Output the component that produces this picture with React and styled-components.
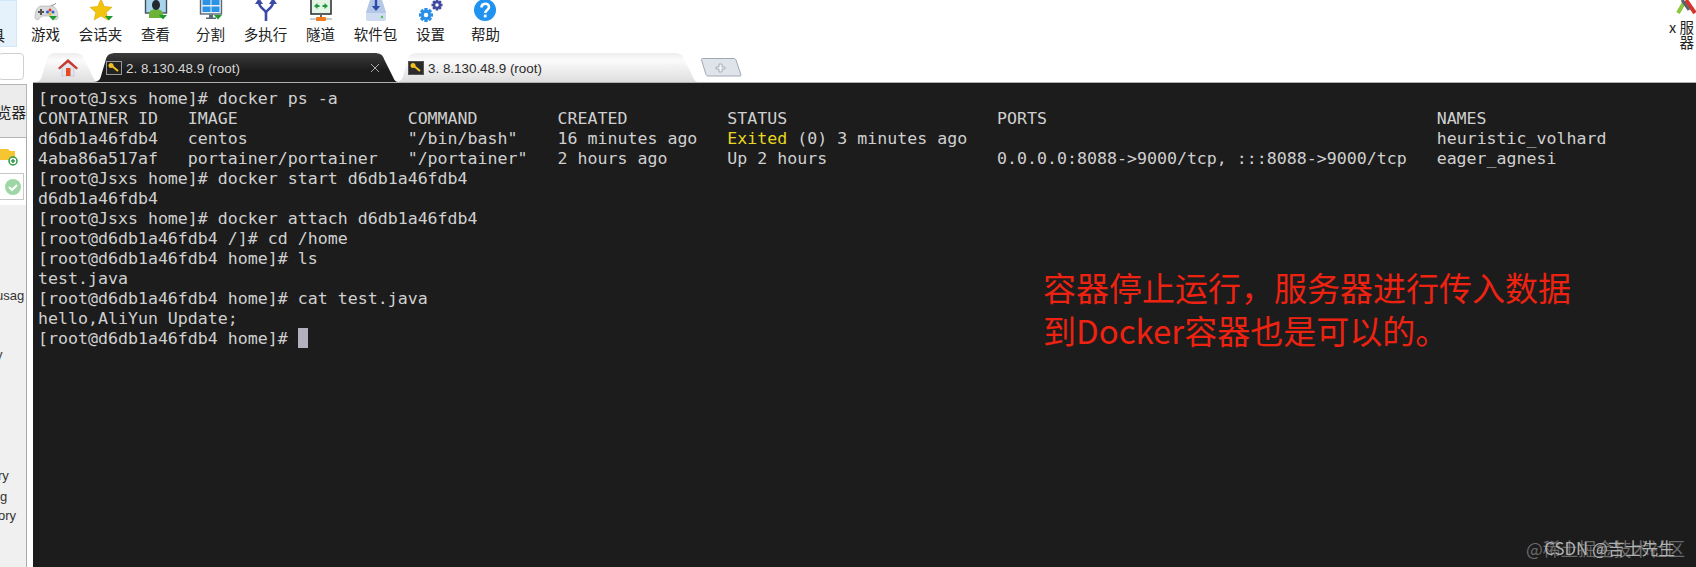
import React from 'react';
import styled, { createGlobalStyle } from 'styled-components';

const cjk = '"Noto Sans CJK SC", "Liberation Sans", sans-serif';

const GlobalStyle = createGlobalStyle`
    html, body {
        margin: 0;
        background: #fff;
        overflow: hidden;
    }
`;

const Page = styled.div`
    display: flex;
    flex-direction: column;
    width: 1696px;
    height: 567px;
    overflow: hidden;
    font-family: ${cjk};
`;

const Toolbar = styled.div`
    display: flex;
    flex: none;
    height: 53px;
    overflow: hidden;
`;

const ActiveTool = styled.div`
    display: flex;
    justify-content: flex-end;
    box-sizing: border-box;
    flex: none;
    width: 17px;
    height: 47px;
    padding: 25px 11px 0 0;
    overflow: hidden;
    background: #e5f1fb;
    border: 1px solid #d3e7f8;
    border-left: 0;
    font-size: 14.5px;
    line-height: 18px;
    color: #222;
`;

const ToolGroup = styled.div`
    display: flex;
    margin-left: 1px;
`;

const Tool = styled.div`
    display: flex;
    flex-direction: column;
    align-items: center;
    width: 55px;
`;

const ToolIcon = styled.svg`
    display: block;
    flex: none;
    width: 40px;
    height: 26px;
    margin-bottom: -1px;
`;

const ToolLabel = styled.span`
    font-size: 14.5px;
    line-height: 18px;
    color: #222;
    white-space: nowrap;
`;

const ServerTool = styled.div`
    display: flex;
    flex-direction: column;
    flex: none;
    width: 29px;
    margin-left: auto;
`;

const ServerIcon = styled.svg`
    display: block;
    width: 29px;
    height: 19px;
`;

const ServerLabel = styled.div`
    padding-right: 2px;
    font-size: 14.5px;
    line-height: 15px;
    text-align: right;
    color: #222;
    white-space: nowrap;
`;

const Body = styled.div`
    display: flex;
    flex: 1;
    min-height: 0;
`;

const Sidebar = styled.aside`
    display: flex;
    flex-direction: column;
    flex: none;
    box-sizing: border-box;
    width: 33px;
    padding-right: 6px;
    overflow: hidden;
`;

const SearchBox = styled.div`
    flex: none;
    box-sizing: border-box;
    width: 26px;
    height: 27px;
    margin-left: -2px;
    background: #fff;
    border: 1px solid #d0d0d0;
    border-radius: 4px;
`;

const SideButton = styled.div`
    display: flex;
    justify-content: flex-end;
    align-items: center;
    flex: none;
    box-sizing: border-box;
    height: 54px;
    margin-top: 4px;
    background: #ececec;
    border: 1px solid #b5b5b5;
    border-left: 0;
    font-size: 14.5px;
    color: #222;
    white-space: nowrap;
`;

const SidePanel = styled.div`
    flex: none;
    box-sizing: border-box;
    height: 67px;
    padding-top: 8px;
    background: #fff;
    border-right: 1px solid #aaa;
`;

const FolderIcon = styled.svg`
    display: block;
    width: 18px;
    height: 24px;
`;

const CheckRow = styled.div`
    display: flex;
    align-items: center;
    justify-content: flex-end;
    box-sizing: border-box;
    width: 24px;
    height: 27px;
    margin-top: 3px;
    padding-right: 2px;
    border: 1px solid #c8c8c8;
    border-left: 0;
`;

const SideList = styled.div`
    flex: 1;
    padding-top: 83px;
    overflow: hidden;
    background: #f0f0f0;
    border-right: 1px solid #aaa;
`;

const SideLine = styled.div`
    width: 28px;
    margin-top: ${(p) => p.$top || 0}px;
    margin-left: ${(p) => p.$left || 0}px;
    overflow: hidden;
    font-family: "Liberation Sans", sans-serif;
    font-size: 13px;
    line-height: 16px;
    color: #333;
`;

const Workspace = styled.div`
    display: flex;
    flex-direction: column;
    flex: 1;
    min-width: 0;
`;

const TabRow = styled.div`
    display: flex;
    flex: none;
    box-sizing: border-box;
    height: 30px;
    border-bottom: 1px solid #b0b0b0;
`;

const tabShape = (w) =>
    `M0 29 C6 29 8 27 9 23 L14 6 C15 2 18 0 24 0 L${w - 24} 0 C${w - 18} 0 ${w - 15} 2 ${w - 14} 6 L${w - 5} 24 C${w - 4} 27 ${w - 2} 29 ${w} 29 Z`;

const Tab = styled.div`
    display: flex;
    align-items: center;
    flex: none;
    box-sizing: border-box;
    width: ${(p) => p.$width}px;
    height: 29px;
    margin-left: ${(p) => p.$overlap || 0}px;
    padding: 1px 18px 0 14px;
    position: relative;
    z-index: ${(p) => (p.$active ? 2 : 1)};
    clip-path: path('${(p) => tabShape(p.$width)}');
    background: ${(p) =>
        p.$active
            ? 'linear-gradient(#3b3b3b, #1c1c1c 60%)'
            : 'linear-gradient(#ededed, #fbfbfb 25%, #dedede)'};
    color: ${(p) => (p.$active ? '#d6d6d6' : '#2b2b2b')};
    font-family: "Liberation Sans", sans-serif;
    font-size: 13.4px;
`;

const HomeIcon = styled.svg`
    display: block;
    width: 20px;
    height: 20px;
    margin-left: 11px;
`;

const KeyIcon = styled.svg`
    display: block;
    flex: none;
    width: 16px;
    height: 14px;
    margin-right: 4px;
`;

const TabClose = styled.svg`
    display: block;
    width: 10px;
    height: 10px;
    margin-left: auto;
`;

const AddTab = styled.svg`
    display: block;
    flex: none;
    width: 42px;
    height: 19px;
    margin: 5px 0 0 2px;
`;

const Terminal = styled.main`
    position: relative;
    flex: 1;
    box-sizing: border-box;
    padding: 6px 0 0 5px;
    background: #1c1c1c;
    color: #d0d0d0;
    font-family: "DejaVu Sans Mono", "Liberation Mono", monospace;
    font-size: 16.6px;
    line-height: 20px;
    white-space: pre;
`;

const TermLine = styled.div`
    height: 20px;
`;

const Exited = styled.span`
    color: #e8d71e;
`;

const Cursor = styled.span`
    display: inline-block;
    width: 10px;
    height: 20px;
    margin-top: -1px;
    vertical-align: top;
    background: #b3b1c0;
`;

const Annotation = styled.div`
    position: absolute;
    top: 183px;
    left: 1010px;
    font-family: ${cjk};
    font-size: 33px;
    line-height: 43px;
    color: #ee2211;
`;

const Watermark = styled.div`
    position: absolute;
    right: ${(p) => p.$right}px;
    bottom: 8px;
    font-family: ${cjk};
    font-size: ${(p) => p.$size}px;
    line-height: 22px;
    color: ${(p) => p.$color};
`;

const Mark = ({ x, y }) => <path d={`M${x - 4} ${y}h8l-4 4.5z`} fill="#1f9a2e" />;

const GameIcon = () => (
    <ToolIcon viewBox="0 0 40 26">
        <path d="M24 7c1-3 5-1 6-4" fill="none" stroke="#8a8a8a" />
        <path d="M15 6h11c4 0 6 7 6 11 0 3-3 4-5 1l-2-2h-9l-2 2c-2 3-5 2-5-1 0-4 2-11 6-11z" fill="#d9dbdd" stroke="#aaa" strokeWidth=".6" />
        <path d="M14 9h2v2h2v2h-2v2h-2v-2h-2v-2h2z" fill="#555" />
        <circle cx="24" cy="10" r="1.5" fill="#d33" />
        <circle cx="27" cy="12" r="1.5" fill="#2c5fd0" />
        <circle cx="21.5" cy="12" r="1.5" fill="#2c5fd0" />
        <circle cx="24" cy="14" r="1.5" fill="#e3c11c" />
        <Mark x={27} y={16} />
    </ToolIcon>
);

const StarIcon = () => (
    <ToolIcon viewBox="0 0 40 26">
        <path d="M20 -1l3.3 7.5 7.7.7-5.8 5.2 1.7 7.6-6.9-4-6.9 4 1.7-7.6-5.8-5.2 7.7-.7z" fill="#f2c40d" stroke="#d9a800" strokeWidth=".6" />
        <Mark x={28} y={16} />
    </ToolIcon>
);

const ViewIcon = () => (
    <ToolIcon viewBox="0 0 40 26">
        <rect x="9.5" y="-3" width="21" height="16" fill="#a8d4ee" stroke="#40505c" strokeWidth="1.4" />
        <path d="M13 13c1-3 4-4 7-4s6 1 7 4v5H13z" fill="#6cb33a" />
        <ellipse cx="20" cy="5" rx="4" ry="5" fill="#23292e" />
        <Mark x={27} y={15} />
    </ToolIcon>
);

const SplitIcon = () => (
    <ToolIcon viewBox="0 0 40 26">
        <rect x="9.5" y="-2" width="21" height="16" fill="#e8eef3" stroke="#5a6a78" strokeWidth="1.4" />
        <path d="M11.5 0h8v5h-8zM20.5 0h8v5h-8zM11.5 6.5h8v5.5h-8zM20.5 6.5h8v5.5h-8z" fill="#2b93e6" />
        <path d="M18 14.5h4v3h3v1.5H15V17.5h3z" fill="#5a6a78" />
        <Mark x={27} y={15} />
    </ToolIcon>
);

const ForkIcon = () => (
    <ToolIcon viewBox="0 0 40 26">
        <path d="M20 21V13C20 9 13 9 13 2M20 13c0-4 7-4 7-11" fill="none" stroke="#3b4aa6" strokeWidth="2.6" />
        <path d="M9 4l4-6 4 6zM23 4l4-6 4 6z" fill="#3b4aa6" />
    </ToolIcon>
);

const TunnelIcon = () => (
    <ToolIcon viewBox="0 0 40 26">
        <rect x="10" y="-2" width="20" height="16" fill="#e4f5e6" stroke="#30363a" strokeWidth="1.6" />
        <path d="M13 6l3.5-3v2h2v2h-2v2zM27 6l-3.5-3v2h-2v2h2v2z" fill="#1f9a3a" />
        <path d="M19 14h2v3h-2z" fill="#666" />
        <path d="M9 19h22" stroke="#999" />
        <rect x="15" y="17" width="10" height="4" rx="1" fill="#f07a1c" />
    </ToolIcon>
);

const PackageIcon = () => (
    <ToolIcon viewBox="0 0 40 26">
        <path d="M14 0h12l4 12v6c0 2-1 3-3 3H13c-2 0-3-1-3-3v-6z" fill="#b4c7e6" />
        <path d="M10 13h20v5c0 2-1 3-3 3H13c-2 0-3-1-3-3z" fill="#cfdcf0" />
        <path d="M18.8 -2h2.4v8h3l-4.200 5-4.200-5h3z" fill="#2f4aa8" />
        <circle cx="26" cy="17" r="1.2" fill="#52c04a" />
    </ToolIcon>
);

const teeth = [0, 45, 90, 135];

const Gear = ({ cx, cy, r, color }) => (
    <g>
        {teeth.map((deg) => (
            <rect
                key={deg}
                x={cx - r * 0.24}
                y={cy - r}
                width={r * 0.48}
                height={r * 2}
                fill={color}
                transform={`rotate(${deg} ${cx} ${cy})`}
            />
        ))}
        <circle cx={cx} cy={cy} r={r * 0.52} fill="none" stroke={color} strokeWidth={r * 0.4} />
        <circle cx={cx} cy={cy} r={r * 0.32} fill="#fff" />
    </g>
);

const GearsIcon = () => (
    <ToolIcon viewBox="0 0 40 26">
        <Gear cx={15} cy={15} r={7} color="#2b8fe8" />
        <Gear cx={26} cy={5} r={5.5} color="#3f4a9e" />
    </ToolIcon>
);

const HelpIcon = () => (
    <ToolIcon viewBox="0 0 40 26">
        <circle cx="19" cy="10" r="11" fill="#1f93ef" />
        <path d="M15.5 7.5c0-5 7.500-5 7.500-.5 0 3-3.700 3-3.700 6" fill="none" stroke="#fff" strokeWidth="2.6" />
        <rect x="17.8" y="14.6" width="2.8" height="2.8" fill="#fff" />
    </ToolIcon>
);

const tools = [
    ['游戏', GameIcon],
    ['会话夹', StarIcon],
    ['查看', ViewIcon],
    ['分割', SplitIcon],
    ['多执行', ForkIcon],
    ['隧道', TunnelIcon],
    ['软件包', PackageIcon],
    ['设置', GearsIcon],
    ['帮助', HelpIcon],
];

const Key = ({ dark }) => (
    <KeyIcon viewBox="0 0 16 14">
        <rect x=".5" y=".5" width="15" height="13" fill={dark ? '#222' : '#2b2b2b'} stroke={dark ? '#999' : '#555'} />
        <path d="M6 5l6 5" stroke="#f0c020" strokeWidth="2" />
        <circle cx="5" cy="4.5" r="2.5" fill="#f0c020" />
    </KeyIcon>
);

const lines = [
    '[root@Jsxs home]# docker ps -a',
    'CONTAINER ID   IMAGE                 COMMAND        CREATED          STATUS                     PORTS                                       NAMES',
    <>
        {'d6db1a46fdb4   centos                "/bin/bash"    16 minutes ago   '}
        <Exited>Exited</Exited>
        {' (0) 3 minutes ago' + ' '.repeat(47) + 'heuristic_volhard'}
    </>,
    '4aba86a517af   portainer/portainer   "/portainer"   2 hours ago      Up 2 hours                 0.0.0.0:8088->9000/tcp, :::8088->9000/tcp   eager_agnesi',
    '[root@Jsxs home]# docker start d6db1a46fdb4',
    'd6db1a46fdb4',
    '[root@Jsxs home]# docker attach d6db1a46fdb4',
    '[root@d6db1a46fdb4 /]# cd /home',
    '[root@d6db1a46fdb4 home]# ls',
    'test.java',
    '[root@d6db1a46fdb4 home]# cat test.java',
    'hello,AliYun Update;',
    <>
        {'[root@d6db1a46fdb4 home]# '}
        <Cursor />
    </>,
];

const App = () => (
    <Page>
        <GlobalStyle />
        <Toolbar>
            <ActiveTool>具</ActiveTool>
            <ToolGroup>
                {tools.map(([label, Icon]) => (
                    <Tool key={label}>
                        <Icon />
                        <ToolLabel>{label}</ToolLabel>
                    </Tool>
                ))}
            </ToolGroup>
            <ServerTool>
                <ServerIcon viewBox="0 0 29 19">
                    <path d="M11 13L18 1" stroke="#8cc63f" strokeWidth="4" />
                    <path d="M19 0l9 13" stroke="#d8322a" strokeWidth="4" />
                    <path d="M15 0l7 10" stroke="#55606e" strokeWidth="3" />
                </ServerIcon>
                <ServerLabel>x 服</ServerLabel>
                <ServerLabel>器</ServerLabel>
            </ServerTool>
        </Toolbar>
        <Body>
            <Sidebar>
                <SearchBox />
                <SideButton>览器</SideButton>
                <SidePanel>
                    <FolderIcon viewBox="0 0 18 24">
                        <path d="M-2 3h10l2 2h5v9H-2z" fill="#f7c531" />
                        <circle cx="13" cy="15" r="4" fill="#fff" stroke="#2f9a47" strokeWidth="1.5" />
                        <path d="M13 13v4M11 15h4" stroke="#2f9a47" strokeWidth="1.5" />
                    </FolderIcon>
                    <CheckRow>
                        <svg width="16" height="20" viewBox="0 0 16 20">
                            <circle cx="8" cy="10" r="8" fill="#9fd6a6" />
                            <path d="M4 10l3 3 5-5" fill="none" stroke="#fff" strokeWidth="2" />
                        </svg>
                    </CheckRow>
                </SidePanel>
                <SideList>
                    <SideLine $left={-4}>usage</SideLine>
                    <SideLine $top={43} $left={-4}>y</SideLine>
                    <SideLine $top={105} $left={-2}>ry</SideLine>
                    <SideLine $top={5}>g</SideLine>
                    <SideLine $top={3} $left={-2}>ory</SideLine>
                </SideList>
            </Sidebar>
            <Workspace>
                <TabRow>
                    <Tab $width={65}>
                        <HomeIcon viewBox="0 0 20 20">
                            <path d="M4 9l6-5 6 5v9H4z" fill="#e3e6f0" stroke="#b9bdc9" strokeWidth=".6" />
                            <path d="M10 1L0 10l1.500 1.500L10 4.500l8.500 7L20 10z" fill="#c8382c" />
                            <rect x="8" y="10" width="4.500" height="8" fill="#e8491d" />
                        </HomeIcon>
                    </Tab>
                    <Tab $active $width={306} $overlap={-6}>
                        <Key dark />
                        2. 8.130.48.9 (root)
                        <TabClose viewBox="0 0 10 10">
                            <path d="M1 1l8 8M9 1l-8 8" stroke="#aaa" />
                        </TabClose>
                    </Tab>
                    <Tab $width={304} $overlap={-4}>
                        <Key />
                        3. 8.130.48.9 (root)
                        <TabClose viewBox="0 0 10 10">
                            <path d="M1 1l8 8M9 1l-8 8" stroke="#eee" />
                        </TabClose>
                    </Tab>
                    <AddTab viewBox="0 0 42 19">
                        <path d="M2.5 .5H34c1 0 1.5.5 2 1.5l5 15c.2 .6 0 1-1 1H8c-1 0-1.500-.5-2-1.500L1.500 2c-.2-.8 0-1.500 1-1.500z" fill="#dfe3ea" stroke="#a2a8b2" />
                        <path d="M19 6h3v3h3v2h-3v3h-3v-3h-3V9h3z" fill="#f2f3f5" stroke="#9299a3" strokeWidth=".7" />
                    </AddTab>
                </TabRow>
                <Terminal>
                    {lines.map((line, i) => (
                        <TermLine key={i}>{line}</TermLine>
                    ))}
                    <Annotation>
                        容器停止运行，服务器进行传入数据
                        <br />
                        到Docker容器也是可以的。
                    </Annotation>
                    <Watermark $right={11} $size={17.8} $color="#6a6a6a">@稀土掘金技术社区</Watermark>
                    <Watermark $right={21} $size={16.8} $color="#b0b0b0">CSDN @吉士先生</Watermark>
                </Terminal>
            </Workspace>
        </Body>
    </Page>
);

export default App;
